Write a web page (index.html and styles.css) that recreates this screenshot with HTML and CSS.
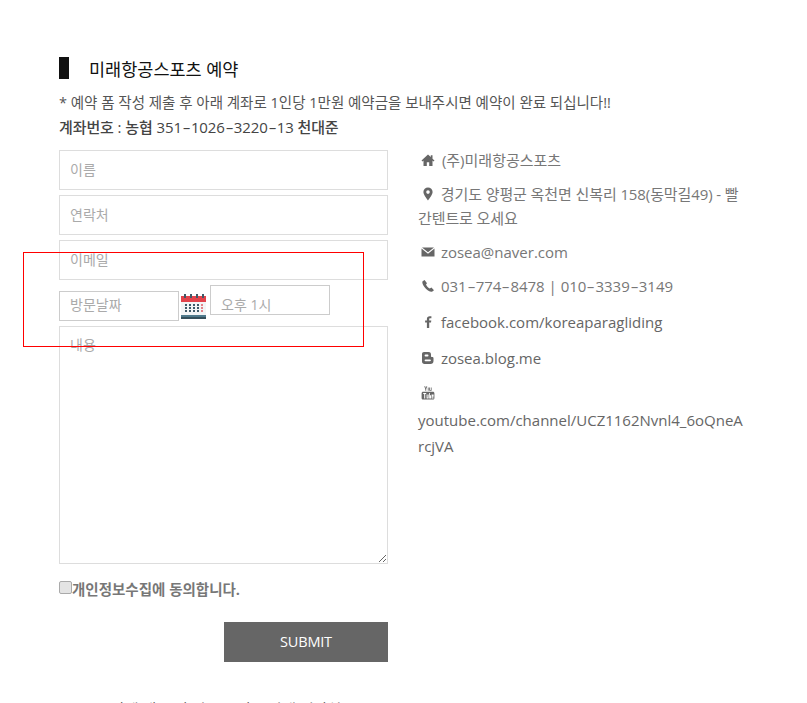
FILE: index.html
```html
<!DOCTYPE html>
<html lang="ko">
<head>
    <meta charset="UTF-8">
    <meta name="viewport" content="width=device-width, initial-scale=1.0">
    <title>미래항공스포츠 예약</title>
    <link rel="stylesheet" href="styles.css">
</head>
<body>
    <div class="page">
        <h2 class="title"><span class="title-bar"></span>미래항공스포츠 예약</h2>
        <p class="notice">* 예약 폼 작성 제출 후 아래 계좌로 1인당 1만원 예약금을 보내주시면 예약이 완료 되십니다!!</p>
        <p class="account">계좌번호 : 농협 351<span class="dash">-</span>1026<span class="dash">-</span>3220<span class="dash">-</span>13 천대준</p>

        <div class="columns">
            <form class="form">
                <input class="field" type="text" placeholder="이름">
                <input class="field" type="text" placeholder="연락처">
                <input class="field" type="text" placeholder="이메일">
                <div class="date-row">
                    <input class="small-field date" type="text" placeholder="방문날짜">
                    <svg class="calendar" viewBox="0 0 25 26" width="25" height="26">
                        <rect x="0" y="3" width="25" height="23" fill="#f3f5f6"/>
                        <rect x="0" y="3" width="25" height="6" fill="#e2434b"/>
                        <rect x="0" y="22" width="25" height="4" fill="#4f7a8c"/>
                        <rect x="0" y="24" width="25" height="2" fill="#34505c"/>
                        <g fill="#3f5a68">
                            <rect x="3" y="1" width="2" height="4"/>
                            <rect x="9" y="1" width="2" height="4"/>
                            <rect x="15" y="1" width="2" height="4"/>
                            <rect x="21" y="1" width="2" height="4"/>
                            <path d="M4 11h2v2H4zM8 11h2v2H8zM12 11h2v2h-2zM16 11h2v2h-2zM4 14h2v2H4zM8 14h2v2H8zM12 14h2v2h-2zM16 14h2v2h-2zM4 17h2v2H4zM8 17h2v2H8zM12 17h2v2h-2zM16 17h2v2h-2z"/>
                        </g>
                        <path d="M20 11h2v2h-2zM20 14h2v2h-2zM20 17h2v2h-2z" fill="#e2838a"/>
                    </svg>
                    <input class="small-field time" type="text" placeholder="오후 1시">
                </div>
                <textarea class="message" placeholder="내용"></textarea>
                <label class="agree"><input class="agree-box" type="checkbox">개인정보수집에 동의합니다.</label>
                <div class="submit-row"><button class="submit" type="button">SUBMIT</button></div>
            </form>

            <ul class="contact">
                <li class="home">
                    <svg class="icon" viewBox="0 0 14 14"><path d="M7 1.5 0.5 7.5 1.5 8.5 2.5 7.6V13H5.8V9.2H8.2V13H11.5V7.6L12.5 8.5 13.5 7.5 11.5 5.7V2.2H9.8V4.1Z"/></svg>
                    (주)미래항공스포츠
                </li>
                <li class="address">
                    <svg class="icon" viewBox="0 0 14 14"><path fill-rule="evenodd" d="M7 0.5A4.6 4.6 0 0 0 2.4 5.1C2.4 8.2 7 13.5 7 13.5S11.6 8.2 11.6 5.1A4.6 4.6 0 0 0 7 0.5ZM7 3.3A1.8 1.8 0 1 1 7 6.9 1.8 1.8 0 0 1 7 3.3Z"/></svg>
                    경기도 양평군 옥천면 신복리 158(동막길49) - 빨간텐트로 오세요
                </li>
                <li class="mail">
                    <svg class="icon" viewBox="0 0 14 14"><path d="M1 2.5H13L7 7.2ZM0.5 3.6 7 8.8 13.5 3.6V11.5H0.5Z"/></svg>
                    zosea@naver.com
                </li>
                <li class="phone">
                    <svg class="icon" viewBox="0 0 14 14"><path d="M3.6 1 1.6 2.2C1 3 1.2 5 3.4 8 5.6 11 8.8 13 11 12.8L13 11.2 10.4 8.6 8.8 9.6C7.6 9 5.6 6.8 5 5.4L6 4.2Z"/></svg>
                    031<span class="dash">-</span>774<span class="dash">-</span>8478 | 010<span class="dash">-</span>3339<span class="dash">-</span>3149
                </li>
                <li class="link">
                    <svg class="icon" viewBox="0 0 14 14"><path d="M8.2 13V7.6H10L10.3 5.5H8.2V4.2C8.2 3.6 8.4 3.2 9.2 3.2H10.4V1.3C10.2 1.3 9.5 1.2 8.7 1.2 7 1.2 5.9 2.2 5.9 4V5.5H4.1V7.6H5.9V13Z"/></svg>
                    facebook.com/koreaparagliding
                </li>
                <li class="link">
                    <svg class="icon" viewBox="0 0 14 14"><path fill-rule="evenodd" d="M3 1H7.5C9.5 1 10 2.2 10 3.8V5.2C10 5.8 10.4 6 11 6 12 6 12.5 6.4 12.5 7.2V10C12.5 12 11.3 13 9.5 13H3.5C2 13 1 12 1 10.5V3C1 1.8 1.8 1 3 1ZM4.5 3.6A.9.9 0 0 0 4.5 5.4H6.6A.9.9 0 0 0 6.6 3.6ZM4.5 8.4A.9.9 0 0 0 4.5 10.2H9A.9.9 0 0 0 9 8.4Z"/></svg>
                    zosea.blog.me
                </li>
                <li class="youtube">
                    <svg class="icon" viewBox="0 0 14 14"><path d="M3.2 0.2H4.2L4.8 2 5.4 0.2H6.3L5.2 3V4.8H4.3V3ZM6.8 1.6H7.6V4.8H6.8ZM8.2 1.6H9V4H9.8V1.6H10.6V4.8H8.2Z"/><path fill-rule="evenodd" d="M2.2 5.8H11.8C12.8 5.8 13.4 6.4 13.4 7.4V12C13.4 13 12.8 13.6 11.8 13.6H2.2C1.2 13.6 0.6 13 0.6 12V7.4C0.6 6.4 1.2 5.8 2.2 5.8ZM2.2 7V8H3.2V12.4H4.2V8H5.2V7ZM5.6 8.6V12.4H7.6V8.6H6.8V11.6H6.4V8.6ZM8.2 7V12.4H10V9.2H9V7ZM10.6 8.6V12.4H12.6V11.6H11.4V10.8H12.6V8.6Z"/></svg>
                    <br>youtube.com/channel/UCZ1162Nvnl4_6oQneArcjVA
                </li>
            </ul>
        </div>

        <p class="cut-off">상세 내용 및 이용 문의는 아래 연락처로</p>
    </div>
    <div class="red-box"></div>
</body>
</html>
```

FILE: styles.css
```css
html, body {
    height: 703px;
    overflow: hidden;
}
body {
    margin: 0;
    background: #fff;
    color: #666;
    font-family: "Open Sans", "Noto Sans CJK KR", sans-serif;
    font-size: 15px;
    position: relative;
}
.page {
    padding: 57px 60px 0 59px;
}
.title {
    display: flex;
    align-items: center;
    margin: 0;
    height: 22px;
    font-size: 17.5px;
    font-weight: 400;
    color: #111;
}
.title-bar {
    width: 10px;
    height: 22px;
    margin-right: 20px;
    background: #111;
}
.notice {
    margin: 12px 0 0;
    line-height: 24px;
    font-size: 14.5px;
    color: #555;
}
.account {
    margin: 0;
    line-height: 24px;
    font-size: 15px;
    font-weight: 500;
    letter-spacing: -0.1px;
    color: #444;
}
.dash {
    display: inline-block;
    width: 9px;
    text-align: center;
    transform: scaleX(1.7);
}
.columns {
    display: flex;
    margin-top: 11px;
}
.form {
    width: 329px;
    margin-right: 30px;
    flex: none;
}
.field,
.small-field,
.message {
    display: block;
    box-sizing: border-box;
    margin: 0;
    padding: 0 10px;
    background: #fff;
    border: 1px solid #ddd;
    border-radius: 0;
    font-family: inherit;
    font-size: 14px;
    color: #666;
}
.field {
    width: 329px;
    height: 40px;
    margin-bottom: 5px;
    padding-bottom: 2px;
}
::placeholder {
    color: #aaa;
    opacity: 1;
}
.date-row {
    display: flex;
    align-items: flex-start;
    height: 41px;
}
.small-field {
    width: 120px;
    height: 30px;
    border-color: #ccc;
}
.date {
    margin-top: 6px;
    padding-bottom: 3px;
}
.time {
    padding-top: 9px;
}
.calendar {
    flex: none;
    margin: 8px 4px 0 2px;
}
.message {
    width: 329px;
    height: 238px;
    padding-top: 7px;
}
.agree {
    display: flex;
    align-items: flex-start;
    margin-top: 15px;
    font-size: 14.5px;
    font-weight: 700;
    color: #777;
    line-height: 22px;
}
.agree-box {
    appearance: none;
    box-sizing: border-box;
    width: 13px;
    height: 13px;
    margin: 2px 0 0;
    background: #e4e4e4;
    border: 1px solid #aaa;
    border-radius: 2px;
}
.submit-row {
    display: flex;
    justify-content: flex-end;
    margin-top: 21px;
}
.submit {
    width: 164px;
    height: 40px;
    padding-bottom: 3px;
    border: none;
    background: #666;
    color: #fff;
    font-family: inherit;
    font-size: 14.5px;
    letter-spacing: -0.2px;
}
.contact {
    flex: 1;
    margin: 0;
    padding: 0;
    list-style: none;
    line-height: 24px;
    word-break: break-all;
    color: #777;
}
.contact li {
    margin-bottom: 10px;
}
.contact .home {
    margin-top: -2px;
}
.contact .address {
    letter-spacing: -0.1px;
}
.contact .phone {
    margin-bottom: 12px;
}
.contact .link {
    margin-bottom: 12px;
    color: #666;
}
.contact .link + .youtube {
    margin-top: -1px;
}
.contact .youtube {
    color: #666;
    line-height: 26px;
}
.icon {
    width: 14px;
    height: 14px;
    margin: 0 2px 0 3px;
    vertical-align: -1px;
    fill: #666;
}
.home .icon {
    margin-right: 3px;
}
.youtube .icon {
    vertical-align: 0;
}
.cut-off {
    margin: 36px 0 0 52px;
    font-size: 15px;
    color: #333;
}
.red-box {
    position: absolute;
    left: 23px;
    top: 252px;
    width: 339px;
    height: 93px;
    border: 1px solid #f00;
}
```
